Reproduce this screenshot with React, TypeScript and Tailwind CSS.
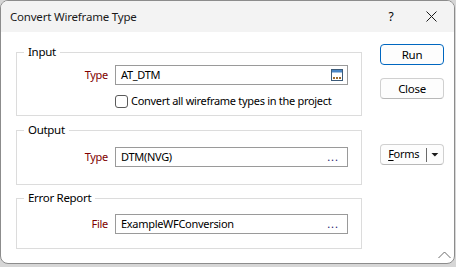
import React from "react";

function WindowIcon() {
  return (
    <svg width="12" height="12" viewBox="0 0 12 12">
      <rect x="0.5" y="0.5" width="11" height="11" fill="#ffffff" stroke="#3c5a78" />
      <rect x="1" y="1" width="10" height="2.5" fill="#4a86c5" />
      <rect x="2" y="8" width="2" height="2" fill="#9c6b2f" />
      <rect x="5" y="8" width="2" height="2" fill="#9c6b2f" />
      <rect x="8" y="8" width="2" height="2" fill="#9c6b2f" />
    </svg>
  );
}

function Dots() {
  return <span className="text-[#1a1a6e] tracking-[1px] leading-none pb-[2px] pr-[4px]">...</span>;
}

function FieldRow({ label, value, icon }: { label: string; value: string; icon: React.ReactNode }) {
  return (
    <div className="flex items-center">
      <span className="w-[91px] text-right text-[#800000]">{label}</span>
      <div className="ml-[7px] w-[233px] h-[20px] border border-[#9a9a9a] bg-white flex items-center justify-between pl-[5px] pr-[4px]">
        <span>{value}</span>
        {icon}
      </div>
    </div>
  );
}

export default function App() {
  return (
    <div className="w-[456px] h-[267px] bg-[#d6d6d6] text-[11px] tracking-[-0.3px] text-black whitespace-nowrap" style={{ fontFamily: '"Noto Sans", "Segoe UI", sans-serif' }}>
      <div className="w-[455px] h-[264px] rounded-[8px] border border-[#8c8c8c] bg-white overflow-hidden flex flex-col">
        {/* Title bar */}
        <div className="h-[31px] bg-[#f3f3f3] flex items-center shrink-0">
          <span className="pl-[9px] flex-1 text-[11.5px] tracking-[-0.2px] text-[#1a1a1a]">Convert Wireframe Type</span>
          <span className="w-[20px] text-center mr-[25px] text-[12px]">?</span>
          <svg width="11" height="11" viewBox="0 0 11 11" className="mr-[17px]">
            <path d="M0.5 0.5 L10.5 10.5 M10.5 0.5 L0.5 10.5" stroke="#1a1a1a" strokeWidth="1" />
          </svg>
        </div>

        {/* Body */}
        <div className="flex flex-1 relative">
          <div className="pl-[15px] pt-[12px] flex flex-col">
            <fieldset className="w-[346px] h-[72px] border border-[#dcdcdc] pl-0 pt-[5px]">
              <legend className="ml-[7px] px-[4px] leading-[16px] text-[11.5px]">Input</legend>
              <FieldRow label="Type" value="AT_DTM" icon={<WindowIcon />} />
              <div className="flex items-center mt-[8px] ml-[98px]">
                <span className="w-[13px] h-[13px] rounded-[3px] border border-[#5a5a5a] bg-white" />
                <span className="ml-[3px]">Convert all wireframe types in the project</span>
              </div>
            </fieldset>

            <fieldset className="mt-[6px] w-[346px] h-[63px] border border-[#dcdcdc] pt-[9px]">
              <legend className="ml-[7px] px-[4px] leading-[16px] text-[11.5px]">Output</legend>
              <FieldRow label="Type" value="DTM(NVG)" icon={<Dots />} />
            </fieldset>

            <fieldset className="mt-[5px] w-[346px] h-[59px] border border-[#dcdcdc] pt-[8px]">
              <legend className="ml-[7px] px-[4px] leading-[16px] text-[11.5px]">Error Report</legend>
              <FieldRow label="File" value="ExampleWFConversion" icon={<Dots />} />
            </fieldset>
          </div>

          {/* Buttons */}
          <div className="ml-[18px] pt-[12px] flex flex-col w-[64px]">
            <button className="h-[21px] rounded-[4px] border border-[#0067c0] bg-[#fdfdfd] leading-none text-[11.5px]">Run</button>
            <button className="mt-[13px] h-[21px] rounded-[4px] border border-[#d0d0d0] border-b-[#b8b8b8] bg-[#fdfdfd] leading-none text-[11.5px]">Close</button>
            <div className="mt-[45px] h-[21px] rounded-[4px] border border-[#d0d0d0] border-b-[#b8b8b8] bg-[#fdfdfd] flex items-center">
              <span className="w-[46px] text-center"><span className="underline underline-offset-2">F</span>orms</span>
              <span className="w-px h-[14px] bg-[#6a6a6a]" />
              <svg width="16" height="6" viewBox="0 0 16 6">
                <path d="M4.5 1 L11.5 1 L8 4.5 Z" fill="#1a1a1a" />
              </svg>
            </div>
          </div>

          {/* Resize grip */}
          <svg width="13" height="8" viewBox="0 0 13 8" className="absolute right-[3px] bottom-[4px]">
            <path d="M0.5 7 L6.5 1 L12.5 7" fill="none" stroke="#6a6a6a" strokeWidth="1" />
          </svg>
        </div>
      </div>
    </div>
  );
}
